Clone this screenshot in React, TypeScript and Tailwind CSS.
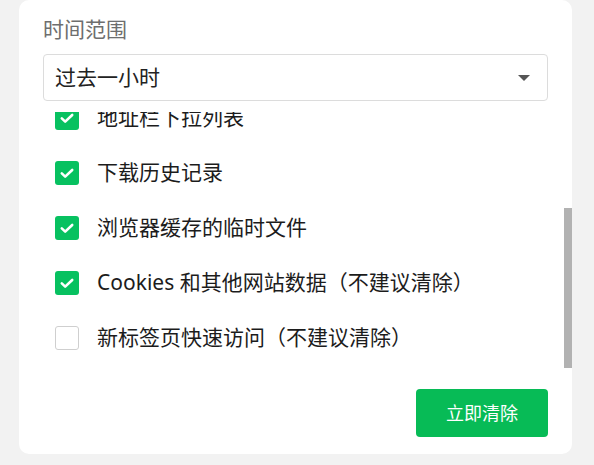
import React from 'react';

interface ClearItem {
  label: string;
  checked: boolean;
}

const items: ClearItem[] = [
  { label: '地址栏下拉列表', checked: true },
  { label: '下载历史记录', checked: true },
  { label: '浏览器缓存的临时文件', checked: true },
  { label: 'Cookies 和其他网站数据（不建议清除）', checked: true },
  { label: '新标签页快速访问（不建议清除）', checked: false },
];

const CheckBox = ({ checked }: { checked: boolean }) => {
  if (!checked) {
    return <div className="w-6 h-6 shrink-0 rounded-[3px] border border-[#cfcfcf] bg-white" />;
  }
  return (
    <div className="w-6 h-6 shrink-0 rounded-[3px] bg-[#07c160] flex items-center justify-center">
      <svg width="24" height="24" viewBox="0 0 24 24" fill="none">
        <path d="M6.8 12.4l3.4 3.2 7-6.6" stroke="#fff" strokeWidth="2.6" strokeLinecap="round" strokeLinejoin="round" />
      </svg>
    </div>
  );
};

const App = () => {
  return (
    <div
      className="h-[465px] w-[594px] bg-[#f2f2f2] pl-[19px] overflow-hidden"
      style={{ fontFamily: '"Noto Sans", "Noto Sans CJK SC", sans-serif' }}
    >
      <div className="w-[553px] h-[454px] bg-white rounded-[10px] px-6 pt-[15px] pb-[17px] flex flex-col">
        <div className="h-[28px] leading-[28px] text-[21px] text-[#6e6e6e] mb-[11px]">时间范围</div>

        <div className="h-[47px] border border-[#dcdcdc] rounded-[4px] flex items-center justify-between pl-[11px] pr-[17px]">
          <span className="text-[21px] text-[#222]">过去一小时</span>
          <svg width="12" height="6" viewBox="0 0 12 6">
            <path d="M0 0h12L6 6z" fill="#555" />
          </svg>
        </div>

        {/* scrolled list */}
        <div className="relative -mx-6 mt-[11px] h-[256px] overflow-hidden">
          <div className="-mt-[22px] pl-9">
            {items.map((item) => (
              <div key={item.label} className="h-[55px] flex items-center gap-[18px]">
                <CheckBox checked={item.checked} />
                <span className="text-[21px] text-[#1c1c1c] whitespace-nowrap">{item.label}</span>
              </div>
            ))}
          </div>
          <div className="absolute right-0 top-[96px] w-2 h-[160px] bg-[#b2b2b2]" />
        </div>

        <div className="mt-[21px] flex justify-end">
          <button className="w-[132px] h-[48px] rounded-[4px] bg-[#07bb56] text-white text-[18px]">
            立即清除
          </button>
        </div>
      </div>
    </div>
  );
};

export default App;
